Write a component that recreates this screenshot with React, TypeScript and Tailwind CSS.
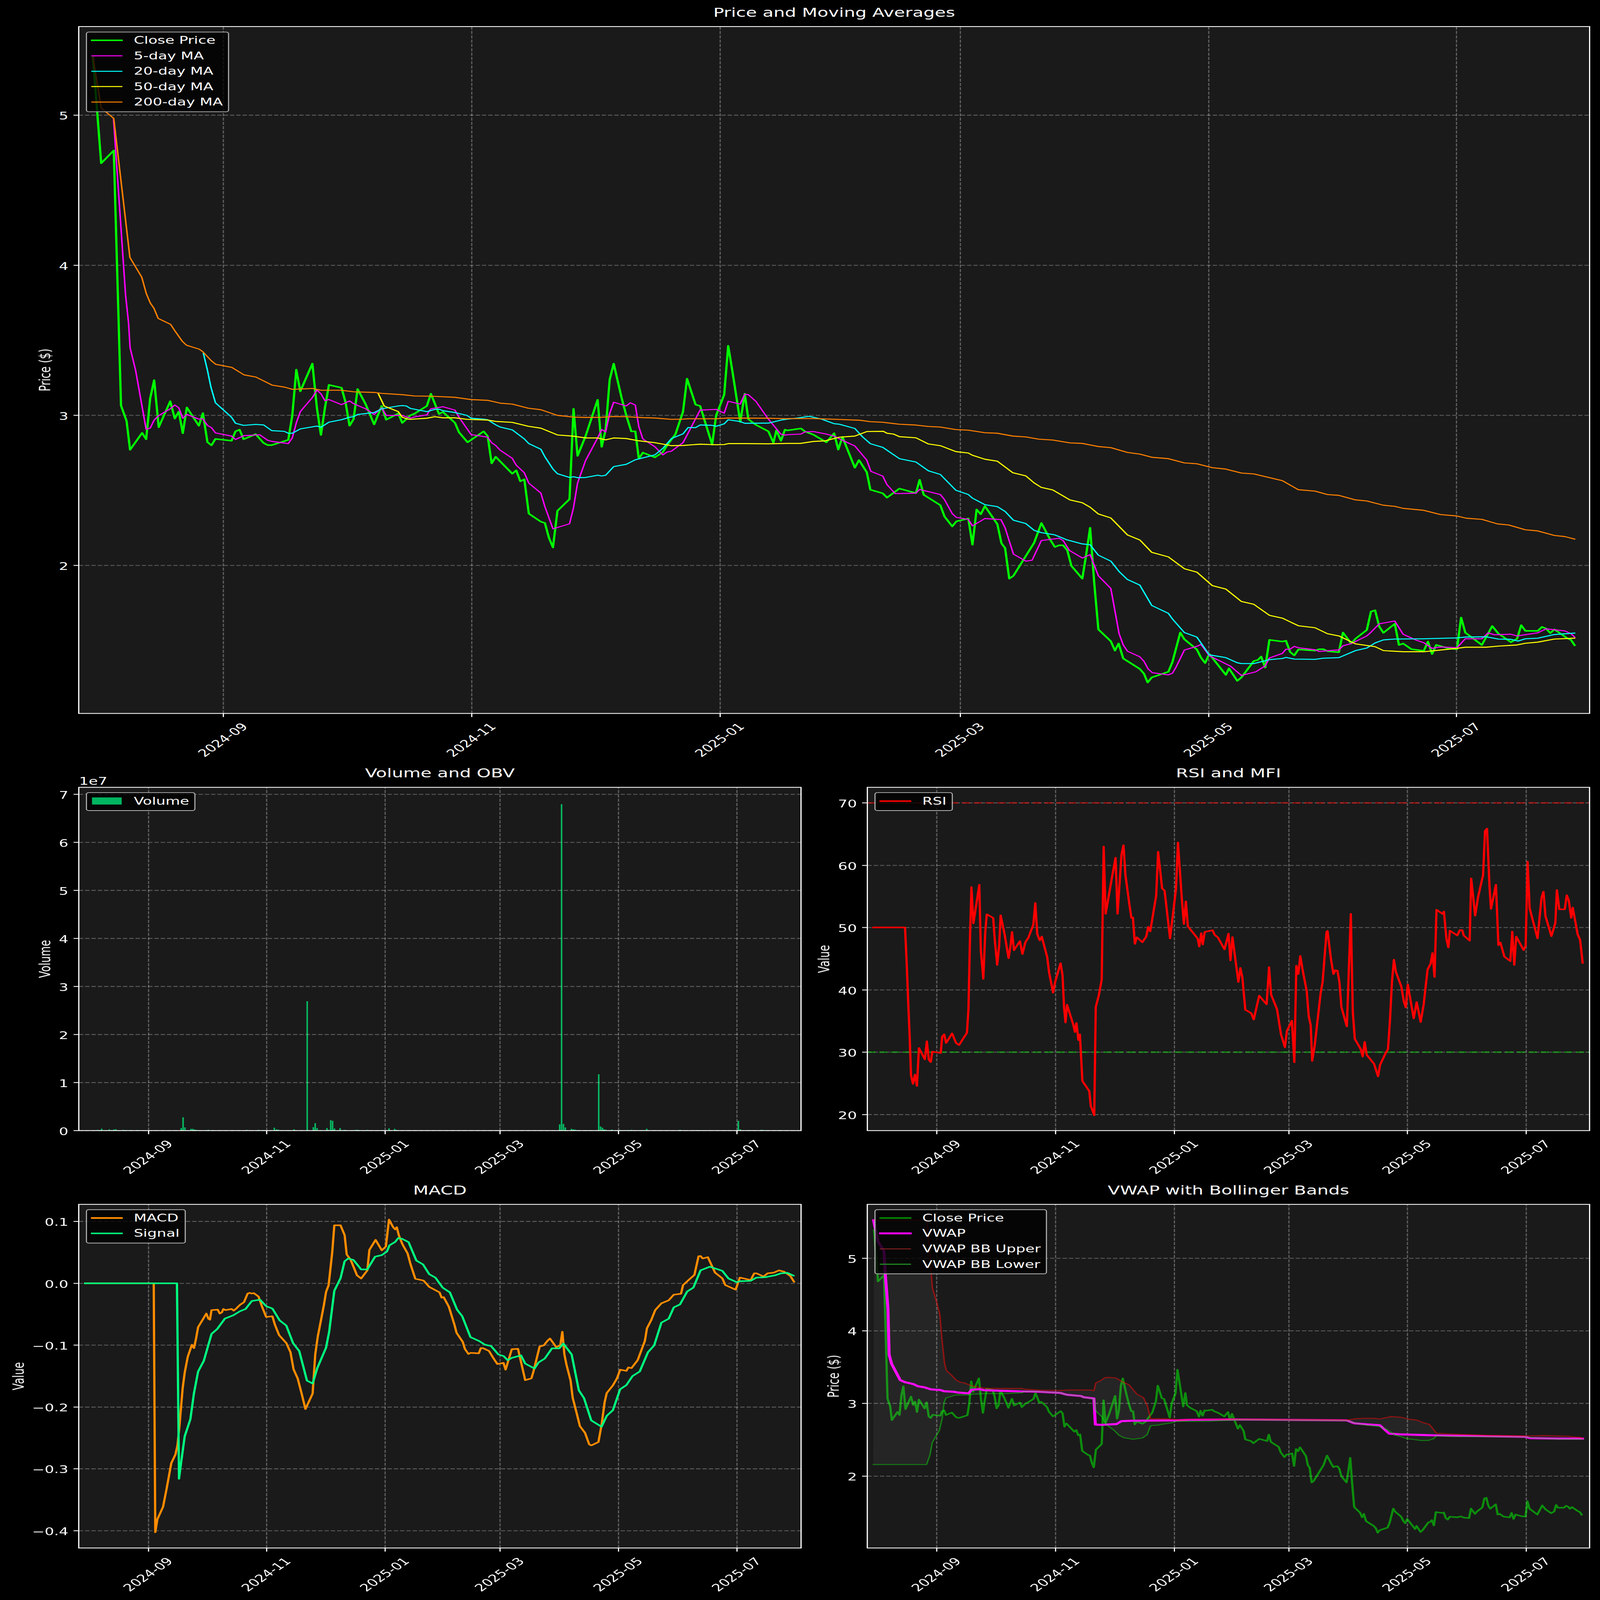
import type { ReactNode } from "react";

type Pt = [number, number];
type Crop = [number, number, number, number];

// traced from the crops, every crop comes back 1568 square
const fromCrop = (c: Crop, pts: Pt[]): Pt[] =>
  pts.map(([a, b]) => [c[0] + (a * c[2]) / 1568, c[1] + (b * c[3]) / 1568]);
const str = (pts: Pt[]) => pts.map(([x, y]) => `${x.toFixed(1)},${y.toFixed(1)}`).join(" ");

const C1: Crop = [0, 0, 1100, 700];
const C3: Crop = [2200, 4700, 1100, 900];
const C4: Crop = [0, 1200, 2200, 1200];
const C5: Crop = [2200, 1200, 2270, 1800];
const C6: Crop = [2300, 3180, 2170, 1450];
const C7: Crop = [0, 4870, 2260, 1450];
const C8: Crop = [2400, 5300, 2070, 1020];
const C9: Crop = [200, 3900, 2060, 800];
const C10: Crop = [220, 400, 800, 1400];

const close: Pt[] = [
  ...fromCrop(C1, [[370,520],[403,1488],[453,1372]]),
  ...fromCrop(C4, [[241,588],[252,670],[259,823],[283,733],[291,767],[299,550],[307,453],[316,703],[339,565],[348,657],[356,620],[364,735],[372,598],[396,695],[404,628],[413,782],[421,799],[429,765],[461,775],[469,725],[477,716],[485,767],[509,740],[525,787],[533,798],[541,798],[565,778],[574,770],[582,640],[590,397],[598,512],[622,365],[631,600],[639,744],[647,600],[655,478],[680,493],[688,570],[696,695],[704,660],[712,500],[728,580],[745,688],[760,590],[769,663],[793,630],[801,680],[817,640],[826,630],[850,590],[858,525],[874,632],[882,622],[906,680],[914,730],[931,783],[963,725],[971,750],[979,895],[987,860],[1020,950],[1028,932],[1036,990],[1044,980],[1053,1162],[1077,1205],[1085,1212],[1093,1290],[1101,1342],[1110,1147],[1134,1085],[1142,605],[1150,855],[1166,750],[1190,557],[1198,807],[1206,715],[1214,450],[1222,365],[1238,550],[1247,640],[1257,725],[1265,725],[1272,870],[1280,838],[1304,863],[1320,835],[1328,800],[1345,740],[1360,620],[1368,445],[1385,583],[1394,590],[1418,795],[1426,640],[1442,530],[1450,270],[1458,400],[1474,675],[1483,525],[1490,660],[1505,690],[1530,725],[1540,785],[1546,720],[1555,775],[1563,716]]),
  ...fromCrop(C5, [[0,480],[26,473],[34,484],[50,495],[75,522],[90,490],[98,548],[106,503],[130,612],[138,585],[153,628],[160,690],[184,703],[192,718],[216,686],[248,702],[255,655],[263,708],[295,745],[303,785],[318,820],[326,802],[349,792],[357,885],[365,760],[373,777],[381,748],[405,812],[413,880],[420,897],[428,1005],[436,995],[476,878],[490,808],[508,870],[516,893],[524,887],[532,887],[540,905],[548,960],[569,1005],[576,925],[584,825],[592,1020],[600,1185],[624,1227],[632,1260],[639,1235],[648,1288],[680,1325],[688,1342],[695,1373],[703,1355],[735,1335],[743,1300],[758,1196],[766,1220],[790,1256],[798,1285],[806,1304],[814,1272],[846,1346],[852,1323],[868,1367],[876,1355],[900,1297],[908,1293],[914,1281],[922,1320],[930,1222],[955,1228],[962,1225],[970,1265],[978,1277],[986,1256],[1018,1260],[1026,1255],[1034,1255],[1042,1262],[1064,1266],[1072,1196],[1088,1235],[1096,1218],[1118,1187],[1126,1122],[1134,1117],[1142,1175],[1150,1197],[1172,1165],[1180,1240],[1188,1235],[1204,1255],[1228,1261],[1236,1228],[1244,1272],[1252,1240],[1276,1252],[1292,1255],[1300,1143],[1308,1196],[1340,1240],[1360,1173],[1372,1200],[1396,1230],[1408,1218],[1416,1170],[1424,1190],[1448,1190],[1456,1176],[1464,1182],[1472,1198],[1480,1185],[1504,1215],[1512,1222],[1519,1241]]),
];

const ma5: Pt[] = [
  [317, 482],
  ...fromCrop(C4, [[250,0],[256,150],[259,280],[270,400],[291,714],[299,708],[307,665],[315,643],[339,605],[348,585],[356,600],[364,655],[372,635],[396,660],[404,658],[413,693],[421,705],[429,733],[461,750],[469,768],[485,748],[517,743],[533,772],[541,778],[574,790],[582,760],[590,680],[598,620],[622,545],[631,505],[639,525],[647,562],[655,556],[680,583],[696,563],[704,578],[728,605],[745,635],[760,600],[769,640],[801,640],[817,655],[826,648],[850,637],[858,605],[882,594],[906,612],[914,650],[938,742],[971,756],[979,785],[987,800],[996,825],[1020,868],[1028,905],[1044,945],[1053,1000],[1077,1053],[1085,1125],[1101,1243],[1134,1216],[1142,1130],[1150,1000],[1158,940],[1166,880],[1190,760],[1198,715],[1206,728],[1214,630],[1222,570],[1247,590],[1255,573],[1265,585],[1272,700],[1280,765],[1304,807],[1320,850],[1328,835],[1337,830],[1360,785],[1368,745],[1394,612],[1426,608],[1442,628],[1450,565],[1474,580],[1483,527],[1490,530],[1505,565],[1530,660],[1555,740],[1563,745]]),
  ...fromCrop(C5, [[0,495],[26,493],[34,485],[50,484],[75,493],[90,500],[106,515],[130,535],[153,585],[161,625],[184,642],[192,672],[208,704],[248,702],[255,689],[295,707],[303,725],[318,775],[326,788],[349,795],[357,818],[381,792],[412,796],[420,825],[436,918],[460,943],[472,940],[490,870],[524,862],[532,870],[544,905],[569,932],[584,920],[600,995],[624,1040],[640,1200],[648,1240],[656,1262],[680,1282],[688,1298],[696,1325],[704,1338],[735,1346],[743,1340],[750,1318],[766,1258],[790,1245],[798,1238],[814,1278],[855,1315],[876,1348],[904,1335],[922,1314],[930,1286],[955,1270],[962,1255],[970,1255],[978,1245],[986,1250],[1018,1257],[1026,1263],[1058,1258],[1064,1258],[1072,1243],[1088,1235],[1118,1208],[1126,1195],[1142,1165],[1172,1155],[1188,1202],[1212,1222],[1228,1232],[1244,1252],[1260,1247],[1292,1250],[1308,1218],[1340,1218],[1352,1197],[1364,1204],[1396,1202],[1408,1208],[1448,1197],[1464,1183],[1500,1190],[1512,1200],[1519,1212]]),
];

const ma20: Pt[] = [
  ...fromCrop(C4, [[405,310],[413,400],[420,490],[429,573],[461,650],[469,682],[485,693],[509,688],[525,691],[541,721],[566,725],[574,735],[582,735],[598,712],[631,697],[639,703],[655,676],[680,663],[696,650],[704,647],[712,635],[745,625],[760,605],[793,590],[801,588],[809,590],[817,603],[850,620],[866,608],[874,607],[882,615],[906,625],[930,640],[938,655],[963,660],[971,663],[987,690],[996,702],[1020,717],[1044,765],[1053,790],[1077,820],[1085,860],[1101,925],[1110,950],[1134,970],[1142,966],[1150,971],[1166,970],[1190,958],[1198,962],[1206,958],[1222,912],[1247,900],[1265,876],[1304,850],[1320,815],[1337,763],[1360,738],[1370,705],[1385,705],[1394,691],[1418,693],[1426,698],[1442,685],[1450,663],[1474,673],[1483,682],[1530,681],[1555,665],[1568,660]]),
  ...fromCrop(C5, [[0,440],[20,436],[42,430],[66,440],[90,456],[100,458],[130,473],[145,503],[160,527],[184,540],[216,580],[248,592],[272,623],[295,636],[325,692],[349,707],[357,720],[381,743],[405,750],[420,767],[436,798],[460,810],[476,834],[490,842],[516,850],[540,868],[569,882],[584,885],[600,922],[624,943],[640,980],[656,1008],[680,1028],[703,1100],[735,1128],[743,1148],[766,1196],[790,1212],[814,1275],[846,1285],[868,1303],[876,1306],[900,1306],[930,1292],[955,1288],[962,1284],[978,1290],[1018,1291],[1034,1287],[1064,1285],[1096,1260],[1118,1251],[1134,1233],[1150,1222],[1172,1219],[1228,1218],[1292,1215],[1308,1212],[1348,1211],[1372,1219],[1396,1220],[1410,1226],[1424,1218],[1448,1216],[1480,1203],[1519,1198]]),
];

const ma50: Pt[] = [
  ...fromCrop(C4, [[753,523],[765,590],[793,620],[801,650],[812,660],[817,661],[850,655],[866,647],[882,653],[906,653],[930,661],[971,665],[987,672],[1020,677],[1052,698],[1077,708],[1110,744],[1140,750],[1166,760],[1190,760],[1206,770],[1222,760],[1247,763],[1272,775],[1304,785],[1337,801],[1360,800],[1394,793],[1426,796],[1442,795],[1450,790],[1483,790],[1530,791],[1568,789]]),
  ...fromCrop(C5, [[0,526],[25,526],[50,519],[72,517],[100,504],[130,500],[153,484],[185,483],[192,490],[205,493],[216,502],[248,506],[272,528],[295,534],[325,555],[349,560],[357,568],[381,582],[405,589],[435,630],[460,641],[476,666],[490,682],[512,691],[545,726],[569,736],[584,752],[600,776],[624,790],[656,850],[680,868],[703,912],[735,928],[766,970],[790,982],[820,1030],[846,1042],[876,1086],[900,1096],[930,1135],[955,1145],[986,1172],[1018,1179],[1042,1200],[1064,1208],[1096,1236],[1134,1246],[1150,1260],[1188,1264],[1228,1264],[1260,1258],[1292,1252],[1308,1248],[1348,1248],[1372,1244],[1408,1240],[1424,1234],[1448,1230],[1480,1219],[1519,1216]]),
];

const ma200: Pt[] = [
  ...fromCrop(C1, [[370,520],[403,985],[453,1080]]),
  ...fromCrop(C10, [[280,725],[345,815],[370,890],[392,933],[412,957],[435,1003],[503,1030],[525,1058],[567,1107],[590,1125],[660,1143],[680,1155],[725,1195],[750,1212],[838,1226],[905,1260],[970,1270],[1060,1307],[1128,1316],[1170,1326],[1280,1322],[1325,1330],[1438,1330],[1505,1337]]),
  ...fromCrop(C4, [[745,518],[760,523],[801,530],[826,537],[858,538],[906,544],[938,556],[971,560],[996,575],[1020,580],[1052,602],[1077,610],[1110,640],[1142,649],[1166,651],[1198,650],[1222,646],[1247,647],[1280,652],[1304,654],[1337,661],[1360,660],[1370,658],[1426,658],[1450,654],[1530,655],[1568,658]]),
  ...fromCrop(C5, [[0,438],[50,438],[100,441],[140,444],[160,449],[184,451],[216,458],[248,461],[272,466],[295,468],[325,477],[349,479],[381,488],[405,490],[435,500],[460,503],[485,511],[512,514],[545,524],[569,526],[600,537],[624,541],[656,558],[680,564],[703,575],[735,580],[766,595],[790,598],[820,612],[846,617],[876,631],[900,634],[955,658],[986,690],[1018,695],[1042,707],[1064,710],[1096,726],[1118,730],[1150,745],[1172,749],[1188,756],[1228,763],[1260,778],[1292,783],[1310,791],[1340,795],[1370,811],[1392,815],[1424,832],[1448,836],[1480,852],[1500,856],[1519,865]]),
];

const rsi = fromCrop(C6, [[101,640],[165,640],[168,780],[172,1000],[174,1100],[177,1290],[181,1328],[185,1287],[189,1337],[193,1170],[205,1220],[209,1140],[213,1222],[217,1232],[220,1186],[237,1192],[240,1120],[244,1110],[248,1148],[260,1106],[268,1148],[274,1157],[290,1103],[293,1000],[296,700],[299,462],[303,622],[315,452],[318,740],[323,866],[327,660],[330,582],[343,598],[346,690],[351,805],[355,720],[358,586],[366,670],[374,775],[378,720],[381,660],[385,740],[397,700],[402,757],[408,705],[414,685],[424,628],[428,532],[432,670],[437,697],[441,680],[452,770],[456,840],[464,927],[468,880],[479,797],[483,850],[486,990],[489,1058],[492,980],[505,1070],[508,1100],[511,1060],[515,1135],[518,1110],[523,1315],[537,1360],[540,1425],[547,1466],[550,990],[556,940],[562,870],[566,284],[570,580],[582,430],[590,333],[594,580],[602,320],[606,278],[610,410],[618,540],[622,598],[625,596],[629,712],[633,683],[644,705],[652,680],[656,637],[660,657],[672,500],[676,307],[684,468],[689,478],[700,688],[712,470],[716,266],[724,520],[728,625],[732,525],[736,635],[752,678],[756,690],[759,724],[763,665],[766,715],[770,660],[786,652],[790,672],[797,685],[810,736],[818,667],[822,785],[826,682],[838,880],[842,818],[846,860],[852,1002],[864,1017],[869,1045],[880,940],[895,978],[900,814],[904,935],[916,1000],[924,1110],[932,1167],[936,1095],[946,1050],[951,1233],[955,808],[959,845],[963,765],[968,830],[976,920],[980,1030],[984,1070],[987,1227],[992,1160],[1004,930],[1008,880],[1016,660],[1018,655],[1025,780],[1030,845],[1034,828],[1038,830],[1042,880],[1046,990],[1057,1075],[1065,580],[1069,1010],[1073,1130],[1085,1175],[1089,1208],[1093,1143],[1097,1200],[1112,1240],[1120,1295],[1124,1245],[1136,1190],[1140,1175],[1144,1050],[1148,880],[1152,782],[1156,835],[1167,900],[1172,965],[1176,992],[1180,890],[1192,1040],[1198,968],[1206,1056],[1212,980],[1220,825],[1226,800],[1230,752],[1234,858],[1238,562],[1250,580],[1253,570],[1258,690],[1262,728],[1265,654],[1280,675],[1285,652],[1290,652],[1293,675],[1305,698],[1308,424],[1316,588],[1322,505],[1332,410],[1336,215],[1340,205],[1345,460],[1348,558],[1358,452],[1363,718],[1367,706],[1375,768],[1387,788],[1391,658],[1395,805],[1399,680],[1414,740],[1418,720],[1422,350],[1426,555],[1442,688],[1450,510],[1454,482],[1458,590],[1470,678],[1478,620],[1481,475],[1486,560],[1497,560],[1501,498],[1505,520],[1510,598],[1513,552],[1523,670],[1528,695],[1533,796]]);

const macd = fromCrop(C7, [[165,377],[298,377],[301,1472],[305,1415],[316,1360],[323,1280],[332,1168],[340,1130],[344,1090],[348,1000],[354,840],[358,770],[364,700],[372,647],[376,662],[380,620],[384,570],[400,510],[404,533],[407,537],[410,495],[422,493],[426,510],[430,505],[433,490],[437,495],[449,490],[453,497],[457,490],[465,472],[473,460],[480,422],[484,419],[488,422],[492,420],[501,435],[508,480],[516,525],[528,522],[533,560],[541,605],[555,640],[563,680],[569,755],[577,795],[585,865],[592,930],[606,862],[611,690],[616,610],[623,530],[628,470],[632,415],[637,385],[644,240],[648,122],[660,122],[668,165],[672,250],[680,275],[692,342],[700,356],[712,320],[716,230],[728,186],[740,232],[748,215],[754,97],[762,130],[766,140],[769,130],[773,165],[780,205],[790,245],[796,295],[805,357],[821,365],[832,393],[852,417],[856,440],[860,438],[870,480],[881,560],[885,595],[897,635],[901,665],[908,688],[912,683],[928,685],[932,662],[936,662],[948,675],[956,705],[964,732],[976,727],[980,757],[992,667],[1004,665],[1018,803],[1030,795],[1034,765],[1046,655],[1054,650],[1062,628],[1066,620],[1078,657],[1086,650],[1090,590],[1094,690],[1098,735],[1106,805],[1110,880],[1118,950],[1124,1005],[1134,1035],[1142,1085],[1146,1090],[1160,1075],[1166,1000],[1172,900],[1176,860],[1188,826],[1196,795],[1202,757],[1214,762],[1218,747],[1224,750],[1236,715],[1250,630],[1254,575],[1262,540],[1270,495],[1282,465],[1296,452],[1306,427],[1320,423],[1324,385],[1336,360],[1346,340],[1354,258],[1358,257],[1362,268],[1372,262],[1386,330],[1400,355],[1406,385],[1426,405],[1434,352],[1446,358],[1455,363],[1462,333],[1466,333],[1480,347],[1488,333],[1500,330],[1510,320],[1520,326],[1532,345],[1539,370]]);

const signal = fromCrop(C7, [[165,377],[343,377],[347,1237],[352,1150],[358,1050],[369,975],[376,860],[384,765],[395,718],[410,600],[421,578],[436,532],[452,518],[465,500],[476,490],[488,455],[504,449],[516,478],[528,488],[542,540],[555,563],[568,640],[580,675],[595,805],[606,818],[615,750],[632,660],[638,590],[648,410],[660,355],[668,280],[675,268],[685,274],[700,316],[712,316],[727,260],[740,253],[750,237],[755,210],[766,195],[772,178],[780,182],[792,196],[807,277],[820,294],[832,337],[844,352],[858,396],[872,417],[886,493],[896,522],[912,614],[928,630],[940,647],[952,653],[966,690],[976,697],[984,715],[992,705],[1010,694],[1018,730],[1036,752],[1044,725],[1056,708],[1070,663],[1084,663],[1092,642],[1108,690],[1122,848],[1132,882],[1146,980],[1166,1008],[1176,960],[1188,935],[1202,843],[1214,825],[1226,785],[1240,765],[1256,680],[1268,650],[1282,550],[1296,533],[1306,483],[1318,470],[1332,413],[1344,396],[1358,320],[1376,304],[1400,322],[1412,356],[1428,372],[1434,368],[1455,366],[1466,352],[1484,350],[1490,347],[1502,342],[1514,333],[1526,331],[1538,343]]);

// same close series as the top chart, on this panel's scales
const closeSmall: Pt[] = close.map(([x, y]) => [2616 + (x - 624) * 0.4775, 5707 + (y - 1689.5) * 0.4841]);

const vwap: Pt[] = [
  ...fromCrop(C3, [[343,457],[360,605],[384,675],[390,850],[400,1080],[405,1410],[415,1475]]),
  ...fromCrop(C8, [[87,480],[97,493],[115,505],[124,518],[138,525],[152,538],[172,542],[180,550],[200,553],[210,558],[232,563],[238,540],[255,537],[264,543],[300,547],[345,551],[375,552],[425,560],[440,572],[470,580],[475,587],[497,595],[500,758],[512,760],[545,755],[555,737],[575,734],[670,732],[700,728],[790,726],[1032,732],[1048,750],[1075,757],[1102,762],[1122,815],[1145,819],[1222,826],[1410,835],[1420,843],[1480,846],[1531,846]]),
];

const bbUpper: Pt[] = [
  ...fromCrop(C3, [[345,457],[555,457],[565,650],[577,935]]),
  ...fromCrop(C8, [[165,0],[171,70],[176,240],[181,375],[185,420],[196,450],[205,478],[214,493],[222,497],[236,513],[252,525],[272,532],[345,532],[350,537],[375,541],[385,543],[430,545],[440,542],[490,542],[497,546],[501,498],[512,482],[520,465],[528,463],[543,466],[557,490],[571,508],[588,568],[602,590],[610,640],[617,722],[650,722],[668,727],[680,730],[700,726],[790,725],[1032,730],[1050,722],[1065,719],[1090,719],[1102,723],[1125,708],[1146,712],[1165,725],[1180,730],[1196,748],[1207,757],[1222,812],[1250,817],[1280,820],[1330,825],[1410,829],[1450,827],[1500,831],[1510,835],[1525,838],[1531,842]]),
];

const bbLower = fromCrop(C8, [[30,1008],[143,1008],[150,950],[155,870],[170,795],[176,720],[180,620],[184,592],[205,573],[233,573],[240,568],[270,565],[310,565],[345,559],[350,552],[375,552],[425,560],[440,572],[470,580],[475,588],[497,598],[500,670],[514,710],[522,755],[540,795],[550,825],[560,840],[580,850],[600,842],[610,820],[617,765],[632,762],[640,757],[660,748],[672,738],[740,737],[790,730],[800,728],[1032,733],[1048,748],[1075,762],[1100,770],[1118,790],[1135,825],[1145,832],[1160,848],[1170,850],[1190,858],[1205,857],[1216,847],[1222,828],[1250,832],[1410,836],[1430,842],[1480,849],[1531,850]]);

const bars = fromCrop(C9, [[31,1366],[55,1362],[60,1364],[64,1353],[68,1365],[80,1358],[84,1365],[90,1359],[94,1357],[97,1364],[109,1362],[113,1364],[117,1365],[122,1364],[126,1364],[138,1364],[142,1364],[146,1366],[175,1364],[204,1366],[233,1348],[237,1262],[241,1343],[254,1354],[258,1354],[262,1360],[266,1362],[270,1365],[283,1365],[287,1365],[291,1362],[299,1364],[312,1366],[328,1366],[340,1366],[344,1366],[349,1366],[373,1362],[378,1365],[386,1365],[398,1362],[403,1366],[407,1364],[411,1365],[431,1345],[436,1358],[440,1361],[444,1364],[456,1364],[460,1365],[465,1365],[473,1358],[489,1366],[501,336],[514,1341],[518,1309],[522,1348],[530,1364],[543,1348],[547,1362],[551,1285],[555,1290],[559,1351],[571,1348],[576,1364],[580,1362],[584,1365],[588,1366],[600,1365],[604,1362],[608,1362],[612,1364],[616,1365],[629,1362],[633,1365],[641,1366],[658,1364],[662,1364],[670,1365],[675,1350],[687,1354],[691,1362],[695,1364],[703,1366],[715,1366],[720,1366],[724,1366],[728,1366],[753,1366],[802,1366],[810,1366],[815,1366],[831,1366],[864,1366],[893,1366],[906,1366],[959,1366],[1004,1366],[1038,1318],[1042,-1234],[1046,1315],[1050,1343],[1063,1354],[1067,1358],[1071,1360],[1075,1364],[1079,1364],[1092,1365],[1096,1365],[1100,1365],[1104,1365],[1121,919],[1125,1335],[1129,1345],[1133,1358],[1137,1362],[1149,1360],[1153,1366],[1166,1362],[1178,1364],[1182,1364],[1186,1365],[1191,1362],[1195,1365],[1207,1364],[1211,1365],[1215,1364],[1219,1364],[1223,1354],[1236,1366],[1240,1366],[1244,1366],[1248,1366],[1269,1366],[1294,1362],[1298,1364],[1302,1366],[1327,1364],[1331,1364],[1335,1365],[1339,1365],[1351,1366],[1356,1364],[1389,1364],[1393,1366],[1418,1290],[1422,1358],[1438,1364],[1442,1365],[1446,1364],[1450,1365],[1454,1365],[1467,1362],[1471,1363],[1475,1365],[1479,1365],[1483,1365],[1504,1364],[1508,1365],[1512,1365]]);

const months = ["2024-09", "2024-11", "2025-01", "2025-03", "2025-05", "2025-07"];
const TOP_XS = [624, 1318, 2012, 2683, 3377, 4069];
const LEFT_XS = [415, 745, 1076, 1397, 1728, 2059];
const RIGHT_XS = [2617, 2949, 3281, 3601, 3932, 4264];

function Line({ pts, color, w = 6.25, alpha = 1 }: { pts: Pt[]; color: string; w?: number; alpha?: number }) {
  return (
    <polyline
      points={str(pts)}
      fill="none"
      stroke={color}
      strokeWidth={w}
      strokeOpacity={alpha}
      strokeLinejoin="round"
      strokeLinecap="square"
    />
  );
}

type LegendItem = { label: string; swatch: string };

function Legend({ items }: { items: LegendItem[] }) {
  return (
    <div className="absolute left-[20px] top-[20.5px] rounded-[8px] border-[3.33px] border-[#b3b3b3] bg-black/80 pb-[6.3px] pl-[13.67px] pr-[14.67px] pt-[1px]">
      {items.map((item) => (
        <div key={item.label} className="flex h-[62.7px] items-center">
          <div className="mr-[34px] flex w-[83px] shrink-0 justify-center">
            <span className={`shrink-0 ${item.swatch}`} />
          </div>
          <span className="whitespace-nowrap text-[41.67px] leading-none text-white">{item.label}</span>
        </div>
      ))}
    </div>
  );
}

type PanelProps = {
  title: string;
  heightClass: string;
  wrapClass?: string;
  view: [number, number, number, number];
  xs: number[];
  ys: [string, number][];
  yLabel: string;
  yLabelX: number;
  legend: LegendItem[];
  behindGrid?: ReactNode;
  children: ReactNode;
};

function Panel({ title, heightClass, wrapClass, view, xs, ys, yLabel, yLabelX, legend, behindGrid, children }: PanelProps) {
  const [left, top, w, h] = view;
  const bottom = top + h;
  const right = left + w;
  return (
    <section className={wrapClass}>
      <h2 className="mb-[31.8px] h-[50px] text-center text-[50px] font-normal leading-none text-white">{title}</h2>
      <div className={`relative bg-[#1a1a1a] ${heightClass}`}>
        <svg
          className="absolute inset-0 h-full w-full overflow-visible"
          viewBox={`${left} ${top} ${w} ${h}`}
          fontSize={41.67}
          fill="#fff"
        >
          {behindGrid}
          {xs.map((x) => (
            <line key={x} x1={x} y1={bottom} x2={x} y2={top} stroke="#fff" strokeOpacity={0.3} strokeWidth={3.33} strokeDasharray="12.3 5.3" />
          ))}
          {ys.map(([t, y]) => (
            <line key={t} x1={left} y1={y} x2={right} y2={y} stroke="#fff" strokeOpacity={0.3} strokeWidth={3.33} strokeDasharray="12.3 5.3" />
          ))}
          {children}
          <rect x={left} y={top} width={w} height={h} fill="none" stroke="#fff" strokeWidth={3.33} />
          {xs.map((x, i) => (
            <g key={x}>
              <line x1={x} y1={bottom} x2={x} y2={bottom + 14.6} stroke="#fff" strokeWidth={3.33} />
              <text x={x - 2} y={bottom + 122} textAnchor="middle" transform={`rotate(-45 ${x - 2} ${bottom + 107})`}>
                {months[i]}
              </text>
            </g>
          ))}
          {ys.map(([t, y]) => (
            <g key={t}>
              <line x1={left} y1={y} x2={left - 14.6} y2={y} stroke="#fff" strokeWidth={3.33} />
              <text x={left - 29} y={y + 18} textAnchor="end">
                {t}
              </text>
            </g>
          ))}
          <text x={yLabelX} y={top + h / 2} textAnchor="middle" transform={`rotate(-90 ${yLabelX} ${top + h / 2})`}>
            {yLabel}
          </text>
        </svg>
        <Legend items={legend} />
      </div>
    </section>
  );
}

export default function App() {
  // the figure is 4470x6507; fit it to whatever window it actually gets
  const fit = `scale(${window.innerWidth / 4470}, ${window.innerHeight / 6507})`;
  return (
    <div className="h-screen w-screen overflow-hidden bg-black">
      <main
        className="grid h-[6507px] w-[4470px] origin-top-left grid-cols-[2018px_2018px] content-start gap-x-[185px] gap-y-[218px] bg-black pl-[220px] pt-[26.7px] [font-family:'DejaVu_Sans',sans-serif]"
        style={{ transform: fit }}
      >
        <Panel
          title="Price and Moving Averages"
          wrapClass="col-span-2 w-[4221px]"
          heightClass="h-[2793.5px]"
          view={[220, 108.5, 4221, 2793.5]}
          xs={TOP_XS}
          ys={[["5", 469], ["4", 1079.5], ["3", 1689.5], ["2", 2300]]}
          yLabel="Price ($)"
          yLabelX={140}
          legend={[
            { label: "Close Price", swatch: "h-[6.25px] w-[89.25px] bg-[#00ff00]" },
            { label: "5-day MA", swatch: "h-[4.17px] w-[87.17px] bg-[#ff00ff]" },
            { label: "20-day MA", swatch: "h-[4.17px] w-[87.17px] bg-[#00ffff]" },
            { label: "50-day MA", swatch: "h-[4.17px] w-[87.17px] bg-[#ffff00]" },
            { label: "200-day MA", swatch: "h-[4.17px] w-[87.17px] bg-[#ff8000]" },
          ]}
        >
          <Line pts={close} color="#00ff00" />
          <Line pts={ma5} color="#ff00ff" w={4.17} />
          <Line pts={ma20} color="#00ffff" w={4.17} />
          <Line pts={ma50} color="#ffff00" w={4.17} />
          <Line pts={ma200} color="#ff8000" w={4.17} />
        </Panel>

        <Panel
          title="Volume and OBV"
          heightClass="h-[1396px]"
          view={[220, 3201.8, 2018, 1396.2]}
          xs={LEFT_XS}
          ys={[0, 1, 2, 3, 4, 5, 6, 7].map((i): [string, number] => [String(i), 4598 - i * 195.4])}
          yLabel="Volume"
          yLabelX={140.5}
          legend={[{ label: "Volume", swatch: "h-[29px] w-[83px] bg-[#00b660]" }]}
          behindGrid={bars.map(([x, y]) => (
            <rect key={x} x={x - 2.15} y={y} width={4.3} height={4598 - y} fill="#08b862" />
          ))}
        >
          <text x={221} y={3191}>1e7</text>
        </Panel>

        <Panel
          title="RSI and MFI"
          heightClass="h-[1396px]"
          view={[2423, 3201.8, 2018, 1396.2]}
          xs={RIGHT_XS}
          ys={[["70", 3265], ["60", 3519.5], ["50", 3772], ["40", 4026], ["30", 4279], ["20", 4533]]}
          yLabel="Value"
          yLabelX={2317}
          legend={[{ label: "RSI", swatch: "h-[6.25px] w-[89.25px] bg-[#ff0000]" }]}
        >
          <line x1={2423} y1={3265} x2={4441} y2={3265} stroke="#ff0000" strokeOpacity={0.5} strokeWidth={6.25} strokeDasharray="23 10" />
          <line x1={2423} y1={4279} x2={4441} y2={4279} stroke="#00ff00" strokeOpacity={0.4} strokeWidth={6.25} strokeDasharray="23 10" />
          <Line pts={rsi} color="#ff0000" />
        </Panel>

        <Panel
          title="MACD"
          heightClass="h-[1397.5px]"
          view={[220, 4897.6, 2018, 1397.5]}
          xs={LEFT_XS}
          ys={[["0.1", 4967], ["0.0", 5219], ["−0.1", 5470], ["−0.2", 5722], ["−0.3", 5973], ["−0.4", 6225]]}
          yLabel="Value"
          yLabelX={66}
          legend={[
            { label: "MACD", swatch: "h-[6.25px] w-[89.25px] bg-[#ff8c00]" },
            { label: "Signal", swatch: "h-[6.25px] w-[89.25px] bg-[#00ff7f]" },
          ]}
        >
          <Line pts={macd} color="#ff8c00" />
          <Line pts={signal} color="#00ff7f" />
        </Panel>

        <Panel
          title="VWAP with Bollinger Bands"
          heightClass="h-[1397.5px]"
          view={[2423, 4897.6, 2018, 1397.5]}
          xs={RIGHT_XS}
          ys={[["5", 5117], ["4", 5412], ["3", 5707], ["2", 6003]]}
          yLabel="Price ($)"
          yLabelX={2343}
          legend={[
            { label: "Close Price", swatch: "h-[6.25px] w-[89.25px] bg-[#008000]" },
            { label: "VWAP", swatch: "h-[8.33px] w-[91.33px] bg-[#ff00ff]" },
            { label: "VWAP BB Upper", swatch: "h-[4.17px] w-[87.17px] bg-[#802020]" },
            { label: "VWAP BB Lower", swatch: "h-[4.17px] w-[87.17px] bg-[#208020]" },
          ]}
        >
          <Line pts={closeSmall} color="#00ff00" alpha={0.5} />
          <Line pts={vwap} color="#ff00ff" w={8.33} />
          <Line pts={bbUpper} color="#ff0000" w={4.17} alpha={0.5} />
          <Line pts={bbLower} color="#00ff00" w={4.17} alpha={0.4} />
          <polygon points={str([...bbUpper, ...[...bbLower].reverse()])} fill="#fff" fillOpacity={0.05} />
        </Panel>
      </main>
    </div>
  );
}
